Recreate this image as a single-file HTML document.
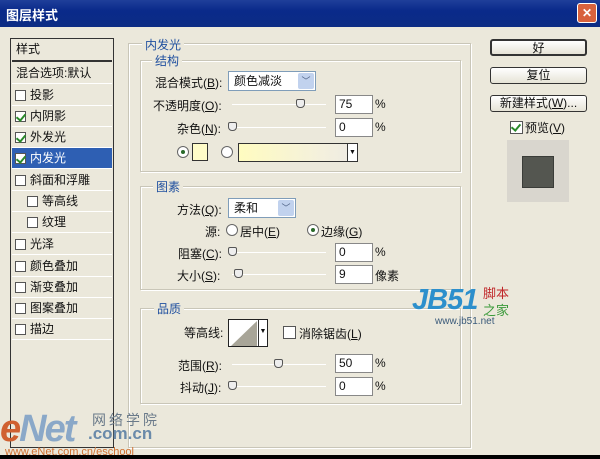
<!DOCTYPE html>
<html><head><meta charset="utf-8"><style>
*{margin:0;padding:0;box-sizing:border-box}
body{width:600px;height:459px;overflow:hidden;background:#000;font-family:"Liberation Sans","Noto Sans CJK SC",sans-serif;font-size:12px;color:#111;position:relative}
.a{position:absolute;white-space:nowrap}
#win{position:absolute;left:0;top:0;width:600px;height:455px;background:#EBE8DB}
#title{position:absolute;left:0;top:0;width:600px;height:27px;background:linear-gradient(#1F3F9A,#0A2A8A 40%,#0C2C84);}
.gb{position:absolute;border:1px solid #C9C6B8;box-shadow:inset 1px 1px 0 #fff,1px 1px 0 #fff}
.lg{position:absolute;background:#EBE8DB;padding:0 3px;color:#1F4F9F}
.cb{position:absolute;width:11px;height:11px;border:1px solid #555;background:#fff}
.cb.c::after{content:"";position:absolute;left:2px;top:0px;width:4px;height:7px;border:solid #2A8A2A;border-width:0 2px 2px 0;transform:rotate(40deg)}
.row{position:absolute;left:12px;width:100px;height:21px;border-bottom:1px solid #fff;line-height:20px}
.in{position:absolute;width:38px;height:19px;background:#fff;border:1px solid #888;padding-left:3px;line-height:17px}
.sl{position:absolute;height:1px;background:#999;border-bottom:1px solid #fff}
.h{position:absolute;width:9px;height:9px;border:1px solid #555;background:#EEE;border-radius:2px 2px 4px 4px}
.rd{position:absolute;width:12px;height:12px;border-radius:50%;border:1px solid #666;background:#fff}
.rd.o::after{content:"";position:absolute;left:3px;top:3px;width:4px;height:4px;border-radius:50%;background:#2A6A2A}
.btn{position:absolute;left:490px;width:97px;height:17px;border:1px solid #333;border-radius:3px;background:linear-gradient(#fff,#E6E3D6);text-align:center;line-height:15px}
.dd{position:absolute;height:20px;background:#fff;border:1px solid #7F9DB9;padding-left:5px;line-height:18px}
.dd b{position:absolute;right:1px;top:1px;width:16px;height:16px;background:#C1D2EE;border-radius:2px;font-weight:normal;font-size:9px;text-align:center;line-height:16px;color:#4D6185}
</style></head><body>
<div id="win">
<div id="title"><div class="a" style="left:6px;top:5px;color:#fff;font-weight:bold;font-size:13px">图层样式</div>
<div class="a" style="left:577px;top:3px;width:20px;height:20px;background:#D8623E;border:1px solid #fff;border-radius:3px;color:#fff;text-align:center;line-height:18px;font-weight:bold">✕</div></div>

<div class="a" style="left:10px;top:38px;width:104px;height:410px;border:1px solid #333;background:#EBE8DB"></div>
<div class="row" style="top:39px;border-bottom:2px solid #333;height:23px;padding-left:4px">样式</div>
<div class="row" style="top:63px;padding-left:4px">混合选项:默认</div>
<div class="row" style="top:85px;padding-left:18px"><span class="cb" style="left:3px;top:5px"></span>投影</div>
<div class="row" style="top:106px;padding-left:18px"><span class="cb c" style="left:3px;top:5px"></span>内阴影</div>
<div class="row" style="top:127px;padding-left:18px"><span class="cb c" style="left:3px;top:5px"></span>外发光</div>
<div class="row" style="top:148px;padding-left:18px;background:#2E5FB3;color:#fff"><span class="cb c" style="left:3px;top:5px"></span>内发光</div>
<div class="row" style="top:170px;padding-left:18px"><span class="cb" style="left:3px;top:5px"></span>斜面和浮雕</div>
<div class="row" style="top:191px;padding-left:30px"><span class="cb" style="left:15px;top:5px"></span>等高线</div>
<div class="row" style="top:212px;padding-left:30px"><span class="cb" style="left:15px;top:5px"></span>纹理</div>
<div class="row" style="top:234px;padding-left:18px"><span class="cb" style="left:3px;top:5px"></span>光泽</div>
<div class="row" style="top:256px;padding-left:18px"><span class="cb" style="left:3px;top:5px"></span>颜色叠加</div>
<div class="row" style="top:277px;padding-left:18px"><span class="cb" style="left:3px;top:5px"></span>渐变叠加</div>
<div class="row" style="top:298px;padding-left:18px"><span class="cb" style="left:3px;top:5px"></span>图案叠加</div>
<div class="row" style="top:319px;padding-left:18px"><span class="cb" style="left:3px;top:5px"></span>描边</div>

<div class="gb" style="left:128px;top:43px;width:343px;height:405px"></div>
<div class="lg" style="left:142px;top:36px;color:#1F4F9F">内发光</div>
<div class="gb" style="left:140px;top:60px;width:321px;height:112px"></div>
<div class="lg" style="left:152px;top:52px">结构</div>
<div class="gb" style="left:140px;top:186px;width:321px;height:104px"></div>
<div class="lg" style="left:153px;top:178px">图素</div>
<div class="gb" style="left:140px;top:308px;width:321px;height:96px"></div>
<div class="lg" style="left:154px;top:300px">品质</div>

<div class="a" style="left:155px;top:74px">混合模式(<u>B</u>):</div>
<div class="dd" style="left:228px;top:71px;width:88px">颜色减淡<b>﹀</b></div>
<div class="a" style="left:153px;top:97px">不透明度(<u>O</u>):</div>
<div class="sl" style="left:232px;top:104px;width:94px"></div><div class="h" style="left:296px;top:99px"></div>
<div class="in" style="left:335px;top:95px">75</div><div class="a" style="left:375px;top:97px">%</div>
<div class="a" style="left:177px;top:120px">杂色(<u>N</u>):</div>
<div class="sl" style="left:232px;top:127px;width:94px"></div><div class="h" style="left:228px;top:122px"></div>
<div class="in" style="left:335px;top:118px">0</div><div class="a" style="left:375px;top:120px">%</div>
<div class="rd o" style="left:177px;top:146px"></div>
<div class="a" style="left:192px;top:143px;width:16px;height:18px;background:#FFFCC8;border:1px solid #333"></div>
<div class="rd" style="left:221px;top:146px"></div>
<div class="a" style="left:238px;top:143px;width:120px;height:19px;border:1px solid #333;background:linear-gradient(90deg,#FFFCC0,#F4F0DD 70%,#EDEAE4)"><span style="position:absolute;right:0;top:0;width:10px;height:17px;background:#fff;border-left:1px solid #333;font-size:7px;text-align:center;line-height:17px">▼</span></div>

<div class="a" style="left:177px;top:201px">方法(<u>Q</u>):</div>
<div class="dd" style="left:228px;top:198px;width:68px">柔和<b>﹀</b></div>
<div class="a" style="left:205px;top:223px">源:</div>
<div class="rd" style="left:226px;top:224px"></div><div class="a" style="left:240px;top:223px">居中(<u>E</u>)</div>
<div class="rd o" style="left:307px;top:224px"></div><div class="a" style="left:321px;top:223px">边缘(<u>G</u>)</div>
<div class="a" style="left:178px;top:245px">阻塞(<u>C</u>):</div>
<div class="sl" style="left:232px;top:252px;width:94px"></div><div class="h" style="left:228px;top:247px"></div>
<div class="in" style="left:335px;top:243px">0</div><div class="a" style="left:375px;top:245px">%</div>
<div class="a" style="left:177px;top:267px">大小(<u>S</u>):</div>
<div class="sl" style="left:232px;top:274px;width:94px"></div><div class="h" style="left:234px;top:269px"></div>
<div class="in" style="left:335px;top:265px">9</div><div class="a" style="left:375px;top:267px">像素</div>

<div class="a" style="left:184px;top:324px">等高线:</div>
<div class="a" style="left:228px;top:319px;width:40px;height:28px;border:1px solid #222;background:#fff"><svg width="30" height="26" style="position:absolute;left:0;top:0"><polygon points="2,26 28,1 28,26" fill="#A8A598"/></svg><span style="position:absolute;right:0;top:0;width:9px;height:26px;border-left:1px solid #333;font-size:7px;text-align:center;line-height:24px">▼</span></div>
<div class="cb" style="left:283px;top:326px;width:13px;height:13px"></div>
<div class="a" style="left:299px;top:325px">消除锯齿(<u>L</u>)</div>
<div class="a" style="left:178px;top:357px">范围(<u>R</u>):</div>
<div class="sl" style="left:232px;top:364px;width:94px"></div><div class="h" style="left:274px;top:359px"></div>
<div class="in" style="left:335px;top:354px">50</div><div class="a" style="left:375px;top:356px">%</div>
<div class="a" style="left:180px;top:379px">抖动(<u>J</u>):</div>
<div class="sl" style="left:232px;top:386px;width:94px"></div><div class="h" style="left:228px;top:381px"></div>
<div class="in" style="left:335px;top:377px">0</div><div class="a" style="left:375px;top:379px">%</div>

<div class="btn" style="top:39px;border-width:2px">好</div>
<div class="btn" style="top:67px">复位</div>
<div class="btn" style="top:95px">新建样式(<u>W</u>)...</div>
<div class="cb c" style="left:510px;top:121px;width:13px;height:13px"></div>
<div class="a" style="left:525px;top:119px">预览(<u>V</u>)</div>
<div class="a" style="left:507px;top:140px;width:62px;height:62px;background:#D9D6CE"></div>
<div class="a" style="left:522px;top:156px;width:32px;height:32px;background:#545650;border:1px solid #3A3C38"></div>

<div class="a" style="left:412px;top:284px;font-size:29px;font-weight:bold;color:#2C8FCC;font-style:italic;letter-spacing:-1px">JB51</div>
<div class="a" style="left:483px;top:283px;color:#C0282A;font-size:13px">脚本</div>
<div class="a" style="left:483px;top:300px;color:#3A9A3A;font-size:13px">之家</div>
<div class="a" style="left:435px;top:316px;color:#3A5A7A;font-size:10px">www.jb51.net</div>
<div class="a" style="left:0px;top:408px;font-size:38px;font-weight:bold;color:#8AA8C8;letter-spacing:-2px;font-style:italic"><span style="color:#D06030">e</span>Net</div>
<div class="a" style="left:92px;top:410px;color:#6A7A8A;font-size:14px;letter-spacing:3px">网络学院</div>
<div class="a" style="left:88px;top:424px;color:#6A8AAA;font-weight:bold;font-size:17px">.com.cn</div>
<div class="a" style="left:5px;top:446px;color:#D07030;font-size:11px">www.eNet.com.cn/eschool</div>
</div>
</body></html>
